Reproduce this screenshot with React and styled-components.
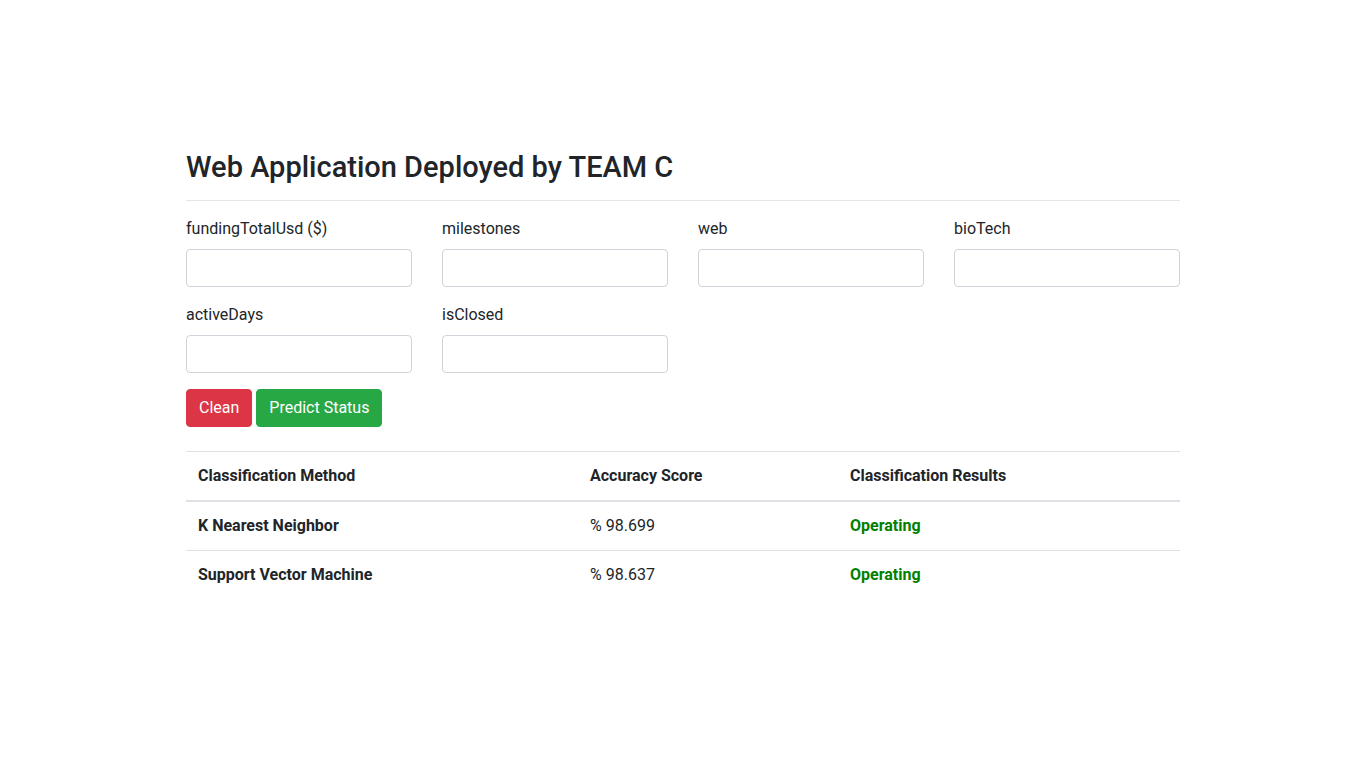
import React, { useState } from 'react';
import styled, { createGlobalStyle } from 'styled-components';

const GlobalStyle = createGlobalStyle`
  body {
    margin: 0;
    background: #fff;
    color: #212529;
    font-family: Roboto, 'Liberation Sans', sans-serif;
    font-size: 16px;
    line-height: 1.5;
  }
  * { box-sizing: border-box; }
`;

const Container = styled.div`
  width: 994px;
  margin: 0 auto;
  padding-top: 150px;
`;

const Title = styled.h2`
  margin: 0 0 15px;
  font-size: 29px;
  font-weight: 500;
  line-height: 1.2;
`;

const Divider = styled.hr`
  margin: 0 0 16px;
  border: 0;
  border-top: 1px solid rgba(0, 0, 0, 0.1);
`;

const FieldGrid = styled.div`
  display: grid;
  grid-template-columns: repeat(4, 1fr);
  column-gap: 30px;
`;

const FormGroup = styled.div`
  margin-bottom: 16px;
`;

const Label = styled.label`
  display: block;
  margin-bottom: 8px;
`;

const Input = styled.input`
  display: block;
  width: 100%;
  height: 38px;
  padding: 6px 12px;
  font-size: 16px;
  font-family: inherit;
  color: #495057;
  border: 1px solid #ced4da;
  border-radius: 4px;
  outline: none;
`;

const Actions = styled.div`
  display: flex;
  gap: 4px;
`;

const Button = styled.button`
  height: 38px;
  padding: 6px 12px;
  font-size: 16px;
  font-family: inherit;
  line-height: 1.5;
  color: #fff;
  border: 1px solid ${(p) => p.$bg};
  background-color: ${(p) => p.$bg};
  border-radius: 4px;
  cursor: pointer;
`;

const Table = styled.table`
  width: 100%;
  margin-top: 24px;
  border-collapse: collapse;
  color: #212529;
`;

const HeadCell = styled.th`
  padding: 12px;
  text-align: left;
  font-weight: 700;
  border-top: 1px solid #dee2e6;
  border-bottom: 2px solid #dee2e6;
  width: ${(p) => p.$w};
`;

const RowHead = styled.th`
  padding: 12px;
  text-align: left;
  font-weight: 700;
  border-top: 1px solid #dee2e6;
`;

const Cell = styled.td`
  padding: 12px;
  border-top: 1px solid #dee2e6;
  color: ${(p) => (p.$ok ? '#008000' : 'inherit')};
  font-weight: ${(p) => (p.$ok ? 700 : 400)};
`;

const fields = ['fundingTotalUsd ($)', 'milestones', 'web', 'bioTech', 'activeDays', 'isClosed'];

const results = [
  { method: 'K Nearest Neighbor', score: '% 98.699', status: 'Operating' },
  { method: 'Support Vector Machine', score: '% 98.637', status: 'Operating' },
];

export default function App() {
  const [values, setValues] = useState({});

  const changeHandler = (name) => (e) => {
    setValues({ ...values, [name]: e.target.value });
  };

  return (
    <>
      <GlobalStyle />
      <Container>
        <Title>Web Application Deployed by TEAM C</Title>
        <Divider />
        <FieldGrid>
          {fields.map((f) => (
            <FormGroup key={f}>
              <Label>{f}</Label>
              <Input value={values[f] || ''} onChange={changeHandler(f)} />
            </FormGroup>
          ))}
        </FieldGrid>
        <Actions>
          <Button $bg="#dc3545" onClick={() => setValues({})}>Clean</Button>
          <Button $bg="#28a745">Predict Status</Button>
        </Actions>
        <Table>
          <thead>
            <tr>
              <HeadCell $w="392px">Classification Method</HeadCell>
              <HeadCell $w="260px">Accuracy Score</HeadCell>
              <HeadCell>Classification Results</HeadCell>
            </tr>
          </thead>
          <tbody>
            {results.map((r) => (
              <tr key={r.method}>
                <RowHead>{r.method}</RowHead>
                <Cell>{r.score}</Cell>
                <Cell $ok>{r.status}</Cell>
              </tr>
            ))}
          </tbody>
        </Table>
      </Container>
    </>
  );
}
